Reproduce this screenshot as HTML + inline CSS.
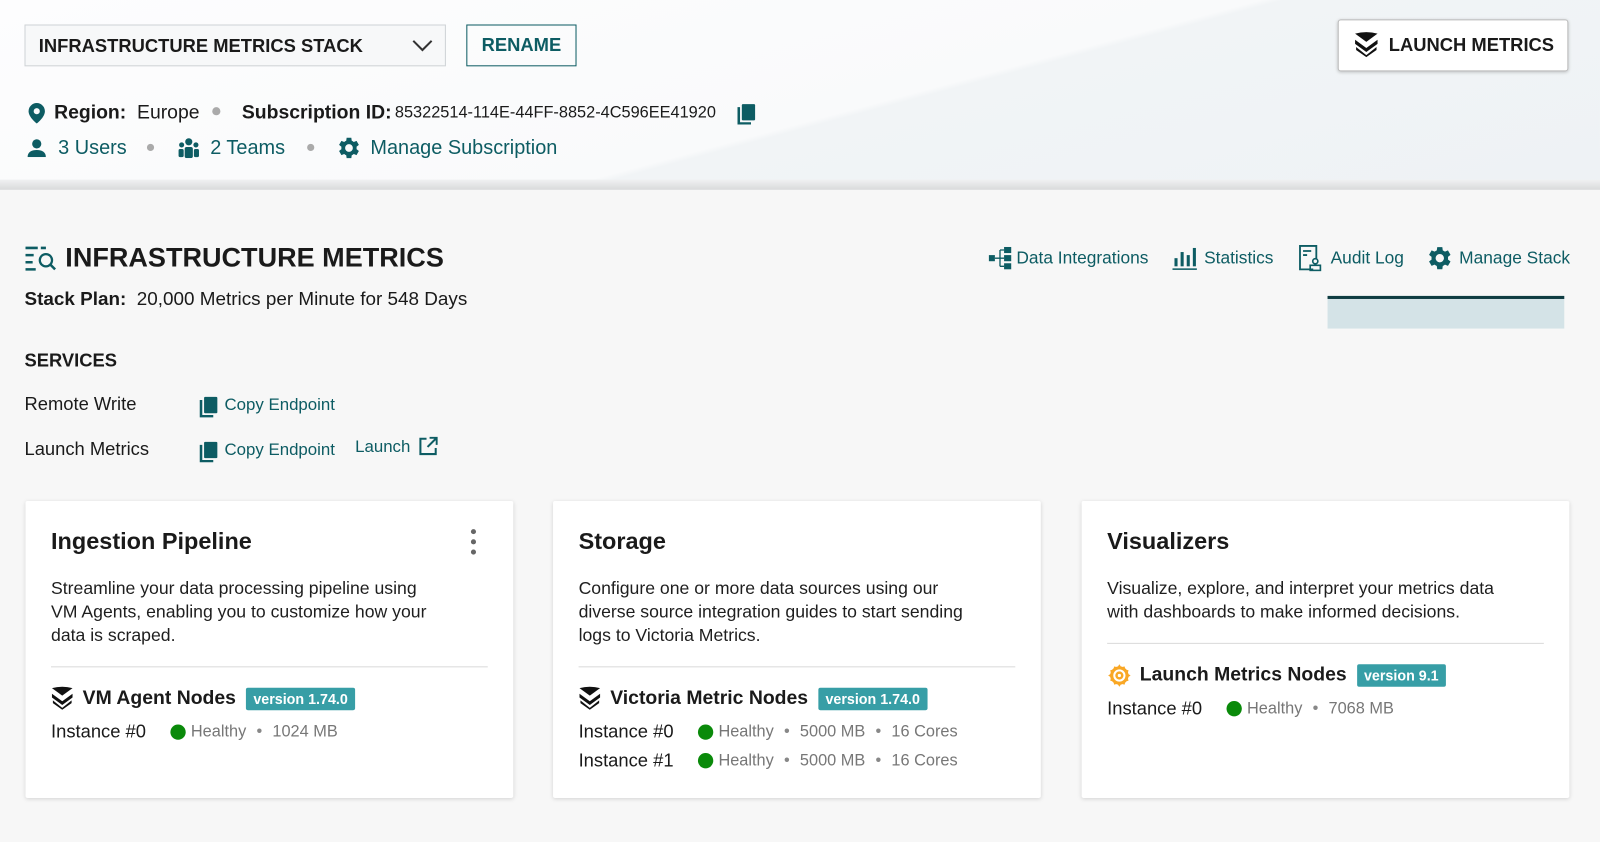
<!DOCTYPE html><html><head><meta charset="utf-8"><style>
*{box-sizing:border-box;margin:0;padding:0}
html,body{width:1600px;height:841px;overflow:hidden;background:#f7f7f7}
#w{position:absolute;left:0;top:0;width:1568px;height:825px;transform:scale(1.0204);transform-origin:0 0;font-family:"Liberation Sans",Arial,sans-serif;color:#1a1a1a}
.a{position:absolute;white-space:nowrap}
.hdr{position:absolute;left:0;top:0;width:1568px;height:182px;background:linear-gradient(165deg,#fdfdfe 0%,#f9fafb 55%,#f1f4f6 56%,#eef2f5 100%)}
.shade{position:absolute;left:0;top:176px;width:1568px;height:10px;background:linear-gradient(#f0f1f2,#d9dadb)}
.teal{color:#0d5c63}
.btn{border:1px solid #cfd3d6;background:#f7f8f9}
.card{position:absolute;top:491px;width:478px;height:291px;background:#fff;box-shadow:0 1px 4px rgba(0,0,0,.15);border-radius:2px}
.card h3{position:absolute;left:25px;top:26px;font-size:23px;font-weight:bold}
.card p{position:absolute;left:25px;top:74px;width:450px;white-space:nowrap;font-size:17.3px;line-height:23px;color:#1e1e1e}
.hr{position:absolute;left:25px;right:25px;height:1px;background:#dadada}
.nodes{position:absolute;left:25px;font-size:19px;font-weight:bold;display:flex;align-items:center}
.badge{background:#379ea6;color:#fff;font-size:14px;font-weight:bold;padding:3px 7px;margin-left:10px;border-radius:2px}
.inst{position:absolute;left:25px;font-size:18px;display:flex;align-items:center}
.inst .g{color:#777;font-size:16px;display:flex;align-items:center}
.dot{width:15px;height:15px;border-radius:50%;background:#0a8a0a;display:inline-block;margin-right:5px}
.sep{margin:0 10px;color:#888}
</style></head><body><div id="w">
<div class="hdr"></div><div class="shade"></div>

<div class="a btn" style="left:24px;top:24px;width:413px;height:41px;font-size:18px;font-weight:bold;padding:10px 13px">INFRASTRUCTURE METRICS STACK</div>
<svg class="a" style="left:403px;top:38px" width="22" height="14" viewBox="0 0 22 14"><path d="M2 2l9 9 9-9" fill="none" stroke="#333" stroke-width="2"/></svg>
<div class="a teal" style="left:457px;top:24px;width:108px;height:41px;border:1.5px solid #0d5c63;font-size:18px;font-weight:bold;text-align:center;line-height:38px">RENAME</div>

<div class="a" style="left:1311px;top:19px;width:226px;height:51px;background:#fff;border:1px solid #bbb;border-radius:3px;box-shadow:0 1px 3px rgba(0,0,0,.2);font-size:18px;font-weight:bold;line-height:49px;padding-left:49px">LAUNCH METRICS</div>
<svg class="a" style="left:1327px;top:31px" width="24" height="26" viewBox="0 0 24 26"><path d="M1 2Q12-1 23 2L12 10Z" fill="#111"/><path d="M1 8l11 8 11-8v4l-11 8-11-8z" fill="#111"/><path d="M2 15l10 8 10-8v3l-10 7-10-7z" fill="#111"/></svg>

<svg class="a" style="left:27px;top:100px" width="18" height="22" viewBox="0 0 18 22"><path d="M9 1a8 8 0 0 0-8 8c0 6 8 12 8 12s8-6 8-12a8 8 0 0 0-8-8z" fill="#0d5c63"/><circle cx="9" cy="9" r="3" fill="#f9fafb"/></svg>
<div class="a" style="left:53px;top:100px;font-size:19px"><b>Region:</b>&nbsp; Europe</div>
<div class="a" style="left:208px;top:105px;width:8px;height:8px;border-radius:50%;background:#aaa"></div>
<div class="a" style="left:237px;top:100px;font-size:19px"><b>Subscription ID:</b></div>
<div class="a" style="left:387px;top:102px;font-size:16px">85322514-114E-44FF-8852-4C596EE41920</div>
<svg class="a" style="left:722px;top:101px" width="20" height="21" viewBox="0 0 20 21"><path d="M2 4v16h12" fill="none" stroke="#0d5c63" stroke-width="2.5"/><rect x="5" y="1" width="13" height="16" rx="1" fill="#0d5c63"/></svg>

<svg class="a" style="left:27px;top:136px" width="18" height="18" viewBox="0 0 18 18"><circle cx="9" cy="5" r="4.5" fill="#0d5c63"/><path d="M0 18c0-5 4-7 9-7s9 2 9 7z" fill="#0d5c63"/></svg>
<div class="a teal" style="left:57px;top:134px;font-size:19.5px">3 Users</div>
<div class="a" style="left:144px;top:141px;width:7px;height:7px;border-radius:50%;background:#aaa"></div>
<svg class="a" style="left:174px;top:135px" width="22" height="20" viewBox="0 0 22 20"><circle cx="11" cy="4" r="3.5" fill="#0d5c63"/><circle cx="4" cy="7" r="2.5" fill="#0d5c63"/><circle cx="18" cy="7" r="2.5" fill="#0d5c63"/><rect x="7" y="9" width="8" height="11" rx="2" fill="#0d5c63"/><rect x="1" y="11" width="5" height="8" rx="1.5" fill="#0d5c63"/><rect x="16" y="11" width="5" height="8" rx="1.5" fill="#0d5c63"/></svg>
<div class="a teal" style="left:206px;top:134px;font-size:19.5px">2 Teams</div>
<div class="a" style="left:301px;top:141px;width:7px;height:7px;border-radius:50%;background:#aaa"></div>
<svg class="a" style="left:330px;top:133px" width="24" height="24" viewBox="0 0 24 24"><path fill="#0d5c63" d="M20.4 13.2a8.4 8.4 0 0 0 0-2.4l2.3-1.8-2.3-4-2.7 1.1a8 8 0 0 0-2-1.2L15.3 2h-4.6l-.4 2.9a8 8 0 0 0-2 1.2L5.6 5 3.3 9l2.3 1.8a8.4 8.4 0 0 0 0 2.4L3.3 15l2.3 4 2.7-1.1a8 8 0 0 0 2 1.2l.4 2.9h4.6l.4-2.9a8 8 0 0 0 2-1.2l2.7 1.1 2.3-4zM13 15.8a3.8 3.8 0 1 1 0-7.6 3.8 3.8 0 0 1 0 7.6z" transform="translate(-1 0)"/></svg>
<div class="a teal" style="left:363px;top:134px;font-size:19.5px">Manage Subscription</div>

<svg class="a" style="left:24px;top:240px" width="32" height="26" viewBox="0 0 32 26"><path d="M1 3h12M1 10h8M1 17h7M1 24h10" stroke="#0d5c63" stroke-width="2.5"/><path d="M16 3h5" stroke="#0d5c63" stroke-width="2.5"/><circle cx="21" cy="15" r="6" fill="none" stroke="#0d5c63" stroke-width="2.2"/><path d="M25 19l5 5" stroke="#0d5c63" stroke-width="2.5"/></svg>
<div class="a" style="left:64px;top:237px;font-size:26.5px;font-weight:bold">INFRASTRUCTURE METRICS</div>
<div class="a" style="left:24px;top:282px;font-size:18.5px"><b>Stack Plan:</b>&nbsp; 20,000 Metrics per Minute for 548 Days</div>

<svg class="a" style="left:969px;top:242px" width="24" height="22" viewBox="0 0 24 22"><rect x="0" y="8" width="6" height="6" fill="#0d5c63"/><path d="M6 11h5M11 3v16M11 3h4M11 11h4M11 19h4" stroke="#0d5c63" stroke-width="1.3" fill="none"/><rect x="15" y="0" width="7" height="6" fill="#0d5c63"/><rect x="15" y="8" width="7" height="6" fill="#0d5c63"/><rect x="15" y="16" width="7" height="6" fill="#0d5c63"/></svg>
<div class="a teal" style="left:996px;top:243px;font-size:17px">Data Integrations</div>
<svg class="a" style="left:1149px;top:241px" width="24" height="24" viewBox="0 0 24 24"><rect x="2" y="12" width="3" height="8" fill="#0d5c63"/><rect x="8" y="6" width="3" height="14" fill="#0d5c63"/><rect x="14" y="9" width="3" height="11" fill="#0d5c63"/><rect x="20" y="2" width="3" height="18" fill="#0d5c63"/><rect x="0" y="22" width="24" height="1.5" fill="#0d5c63"/></svg>
<div class="a teal" style="left:1180px;top:243px;font-size:17px">Statistics</div>
<svg class="a" style="left:1272px;top:240px" width="24" height="26" viewBox="0 0 24 26"><path d="M15 24H2V1h16v13" fill="none" stroke="#0d5c63" stroke-width="1.8"/><path d="M5 6h8M5 10h4" stroke="#0d5c63" stroke-width="1.8"/><circle cx="17" cy="16" r="2.5" fill="none" stroke="#0d5c63" stroke-width="1.6"/><rect x="12" y="20" width="10" height="5" fill="none" stroke="#0d5c63" stroke-width="1.6"/></svg>
<div class="a teal" style="left:1304px;top:243px;font-size:17px">Audit Log</div>
<svg class="a" style="left:1398px;top:240px" width="26" height="26" viewBox="0 0 24 24"><path fill="#0d5c63" d="M20.4 13.2a8.4 8.4 0 0 0 0-2.4l2.3-1.8-2.3-4-2.7 1.1a8 8 0 0 0-2-1.2L15.3 2h-4.6l-.4 2.9a8 8 0 0 0-2 1.2L5.6 5 3.3 9l2.3 1.8a8.4 8.4 0 0 0 0 2.4L3.3 15l2.3 4 2.7-1.1a8 8 0 0 0 2 1.2l.4 2.9h4.6l.4-2.9a8 8 0 0 0 2-1.2l2.7 1.1 2.3-4zM13 15.8a3.8 3.8 0 1 1 0-7.6 3.8 3.8 0 0 1 0 7.6z" transform="translate(-1 0)"/></svg>
<div class="a teal" style="left:1430px;top:243px;font-size:17px">Manage Stack</div>
<div class="a" style="left:1301px;top:290px;width:232px;height:32px;background:#d4e3e7;border-top:3px solid #0f3d42"></div>

<div class="a" style="left:24px;top:343px;font-size:18px;font-weight:bold">SERVICES</div>
<div class="a" style="left:24px;top:386px;font-size:18px">Remote Write</div>
<div class="a" style="left:24px;top:430px;font-size:18px">Launch Metrics</div>
<svg class="a" style="left:195px;top:388px" width="20" height="21" viewBox="0 0 20 21"><path d="M2 4v16h12" fill="none" stroke="#0d5c63" stroke-width="2.5"/><rect x="5" y="1" width="13" height="16" rx="1" fill="#0d5c63"/></svg>
<div class="a teal" style="left:220px;top:388px;font-size:16.5px">Copy Endpoint</div>
<svg class="a" style="left:195px;top:432px" width="20" height="21" viewBox="0 0 20 21"><path d="M2 4v16h12" fill="none" stroke="#0d5c63" stroke-width="2.5"/><rect x="5" y="1" width="13" height="16" rx="1" fill="#0d5c63"/></svg>
<div class="a teal" style="left:220px;top:432px;font-size:16.5px">Copy Endpoint</div>
<div class="a teal" style="left:348px;top:429px;font-size:16.5px">Launch</div>
<svg class="a" style="left:410px;top:428px" width="19" height="19" viewBox="0 0 19 19"><path d="M8 2H2v15h15v-6" fill="none" stroke="#0d5c63" stroke-width="2"/><path d="M11 1h7v7M18 1l-9 9" fill="none" stroke="#0d5c63" stroke-width="2"/></svg>

<div class="card" style="left:25px">
<h3>Ingestion Pipeline</h3>
<svg style="position:absolute;left:435px;top:27px" width="8" height="26"><circle cx="4" cy="3" r="2.5" fill="#666"/><circle cx="4" cy="13" r="2.5" fill="#666"/><circle cx="4" cy="23" r="2.5" fill="#666"/></svg>
<p>Streamline your data processing pipeline using<br>VM Agents, enabling you to customize how your<br>data is scraped.</p>
<div class="hr" style="top:162px"></div>
<div class="nodes" style="top:181px"><svg width="22" height="25" viewBox="0 0 24 26" style="margin-right:9px"><path d="M1 2Q12-1 23 2L12 10Z" fill="#111"/><path d="M1 8l11 8 11-8v4l-11 8-11-8z" fill="#111"/><path d="M2 15l10 8 10-8v3l-10 7-10-7z" fill="#111"/></svg>VM Agent Nodes<span class="badge">version 1.74.0</span></div>
<div class="inst" style="top:216px">Instance #0<span class="g" style="margin-left:24px"><span class="dot"></span>Healthy<span class="sep">•</span>1024 MB</span></div>
</div>

<div class="card" style="left:542px">
<h3>Storage</h3>
<p>Configure one or more data sources using our<br>diverse source integration guides to start sending<br>logs to Victoria Metrics.</p>
<div class="hr" style="top:162px"></div>
<div class="nodes" style="top:181px"><svg width="22" height="25" viewBox="0 0 24 26" style="margin-right:9px"><path d="M1 2Q12-1 23 2L12 10Z" fill="#111"/><path d="M1 8l11 8 11-8v4l-11 8-11-8z" fill="#111"/><path d="M2 15l10 8 10-8v3l-10 7-10-7z" fill="#111"/></svg>Victoria Metric Nodes<span class="badge">version 1.74.0</span></div>
<div class="inst" style="top:216px">Instance #0<span class="g" style="margin-left:24px"><span class="dot"></span>Healthy<span class="sep">•</span>5000 MB<span class="sep">•</span>16 Cores</span></div>
<div class="inst" style="top:244px">Instance #1<span class="g" style="margin-left:24px"><span class="dot"></span>Healthy<span class="sep">•</span>5000 MB<span class="sep">•</span>16 Cores</span></div>
</div>

<div class="card" style="left:1060px">
<h3>Visualizers</h3>
<p>Visualize, explore, and interpret your metrics data<br>with dashboards to make informed decisions.</p>
<div class="hr" style="top:139px"></div>
<div class="nodes" style="top:159px"><svg width="24" height="24" viewBox="0 0 24 24" style="margin-right:8px"><circle cx="12" cy="12" r="9" fill="#f7931e"/><path d="M12 1l2 3 3-1 1 3 3 1-1 3 3 2-3 2 1 3-3 1-1 3-3-1-2 3-2-3-3 1-1-3-3-1 1-3-3-2 3-2-1-3 3-1 1-3 3 1z" fill="#f9a825"/><circle cx="12" cy="12" r="5" fill="none" stroke="#fff" stroke-width="2"/><circle cx="12" cy="12" r="1.6" fill="#fff"/></svg>Launch Metrics Nodes<span class="badge">version 9.1</span></div>
<div class="inst" style="top:193px">Instance #0<span class="g" style="margin-left:24px"><span class="dot"></span>Healthy<span class="sep">•</span>7068 MB</span></div>
</div>
</div></body></html>
